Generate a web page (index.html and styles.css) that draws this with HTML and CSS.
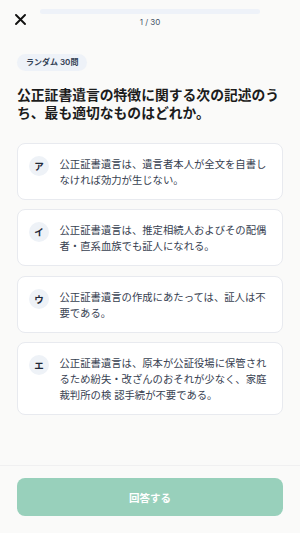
FILE: index.html
```html
<!DOCTYPE html>
<html lang="ja">
<head>
    <meta charset="UTF-8">
    <title>クイズ</title>
    <link rel="stylesheet" href="styles.css">
</head>
<body>
    <div class="page">
        <div class="header">
            <div class="close-btn">
                <svg width="11" height="11" viewBox="0 0 11 11">
                    <path d="M1 1L10 10M10 1L1 10" stroke="#111" stroke-width="1.9" stroke-linecap="round"/>
                </svg>
            </div>
            <div class="progress">
                <div class="progress-bar"><div class="progress-fill"></div></div>
                <div class="progress-count">1 / 30</div>
            </div>
            <div class="header-space"></div>
        </div>

        <div class="main">
            <span class="tag">ランダム 30問</span>
            <h1 class="question">公正証書遺言の特徴に関する次の記述のうち、最も適切なものはどれか。</h1>

            <div class="choices">
                <div class="choice">
                    <span class="choice-mark">ア</span>
                    <p class="choice-text">公正証書遺言は、遺言者本人が全文を自書しなければ効力が生じない。</p>
                </div>
                <div class="choice">
                    <span class="choice-mark">イ</span>
                    <p class="choice-text">公正証書遺言は、推定相続人およびその配偶者・直系血族でも証人になれる。</p>
                </div>
                <div class="choice">
                    <span class="choice-mark">ウ</span>
                    <p class="choice-text">公正証書遺言の作成にあたっては、証人は不要である。</p>
                </div>
                <div class="choice">
                    <span class="choice-mark">エ</span>
                    <p class="choice-text">公正証書遺言は、原本が公証役場に保管されるため紛失・改ざんのおそれが少なく、家庭裁判所の検 認手続が不要である。</p>
                </div>
            </div>
        </div>

        <div class="footer">
            <button class="answer-btn" disabled>回答する</button>
        </div>
    </div>
</body>
</html>
```

FILE: styles.css
```css
*{
    padding: 0;
    margin: 0;
    box-sizing: border-box;
}
body{
    background-color: #fafaf9;
    font-family: Inter, "Noto Sans CJK JP", sans-serif;
    color: #1f2937;
}
.page{
    height: 533px;
    display: flex;
    flex-direction: column;
}

/* header */
.header{
    display: grid;
    grid-template-columns: 40px 1fr 40px;
    padding-top: 9px;
    height: 30px;
}
.close-btn{
    display: flex;
    justify-content: center;
    padding-top: 5px;
}
.progress-bar{
    height: 5px;
    border-radius: 3px;
    background-color: #eef2f9;
}
.progress-fill{
    width: 0;
    height: 100%;
}
.progress-count{
    margin-top: 3px;
    text-align: center;
    font-size: 8px;
    line-height: 10px;
    color: #475569;
}

/* question */
.main{
    flex: 1;
    padding: 24px 17px 0;
    overflow: hidden;
}
.tag{
    display: block;
    width: fit-content;
    padding: 3px 9px;
    border-radius: 9px;
    background-color: #eef2f8;
    font-size: 8px;
    line-height: 10.5px;
    font-weight: 600;
    color: #334155;
}
.question{
    margin-top: 15px;
    font-size: 13.8px;
    line-height: 18px;
    font-weight: 700;
    color: #1c1c1c;
}

.choices{
    margin-top: 21px;
    display: flex;
    flex-direction: column;
    gap: 9.5px;
}
.choice{
    display: flex;
    gap: 10.5px;
    padding: 12px 11px 11px;
    border: 1px solid #e8eaef;
    border-radius: 8px;
    background-color: #fff;
}
.choice-mark{
    flex: none;
    width: 20px;
    height: 20px;
    border-radius: 50%;
    background-color: #eef2f7;
    display: flex;
    align-items: center;
    justify-content: center;
    font-size: 9.5px;
    font-weight: 700;
    color: #1f2937;
}
.choice-text{
    font-size: 10.35px;
    line-height: 16px;
    color: #374151;
}

/* footer */
.footer{
    border-top: 1px solid #f0f0f1;
    padding: 12px 17px 17px;
}
.answer-btn{
    width: 100%;
    height: 38px;
    border: none;
    border-radius: 8px;
    background-color: #98d0bb;
    color: #fff;
    font-family: inherit;
    font-size: 10.5px;
    font-weight: 700;
}
```
